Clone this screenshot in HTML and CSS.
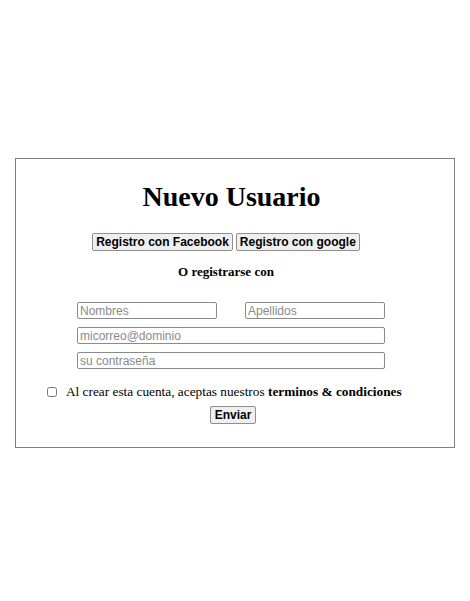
FILE: index.html
```html
<!DOCTYPE html>
<html lang="es">
<head>
<meta charset="utf-8">
<title>Nuevo Usuario</title>
<link rel="stylesheet" href="styles.css">
</head>
<body>
<form class="card">
  <h1 class="title">Nuevo Usuario</h1>
  <div class="social">
    <button type="button" class="btn">Registro con Facebook</button>
    <button type="button" class="btn">Registro con google</button>
  </div>
  <p class="or">O registrarse con</p>
  <div class="fields">
    <div class="names">
      <input class="field short" type="text" placeholder="Nombres">
      <input class="field short" type="text" placeholder="Apellidos">
    </div>
    <input class="field long" type="email" placeholder="micorreo@dominio">
    <input class="field long" type="password" placeholder="su contraseña">
  </div>
  <label class="terms">
    <input class="check" type="checkbox">
    <span>Al crear esta cuenta, aceptas nuestros <b>terminos &amp; condiciones</b></span>
  </label>
  <div class="submit">
    <button type="submit" class="btn">Enviar</button>
  </div>
</form>
</body>
</html>
```

FILE: styles.css
```css
html, body {
  background: #ffffff;
}
body {
  margin: 8px;
  font-family: "Liberation Serif", "Times New Roman", serif;
  color: #000;
}
.card {
  margin: 150px 0 0 7px;
  width: 438px;
  height: 288px;
  border: 1px solid #808080;
  display: flex;
  flex-direction: column;
}
.title {
  margin: 22px 7px 0 0;
  text-align: center;
  font-size: 28px;
  line-height: 32px;
  font-weight: bold;
}
.social {
  margin-top: 20px;
  padding-right: 18px;
  display: flex;
  justify-content: center;
  gap: 3px;
}
.btn {
  font-family: "Liberation Sans", Arial, sans-serif;
  font-size: 12px;
  font-weight: bold;
  line-height: 14px;
  height: 18px;
  padding: 1px 3px;
  color: #000;
  background: #efefef;
  border: 1px solid #8f8f8f;
  border-radius: 2px;
}
.or {
  margin: 13px 18px 0 0;
  text-align: center;
  font-size: 13px;
  line-height: 15px;
  font-weight: bold;
}
.fields {
  margin-top: 23px;
  padding-left: 61px;
  display: flex;
  flex-direction: column;
  gap: 8px;
}
.names {
  display: flex;
  gap: 28px;
}
.field {
  box-sizing: border-box;
  height: 17px;
  margin: 0;
  padding: 0 2px;
  font-family: "Liberation Sans", Arial, sans-serif;
  font-size: 12px;
  border: 1px solid #8a8a8a;
  border-radius: 2px;
  background: #fff;
}
.field::placeholder {
  color: #8a8a8a;
}
.short {
  width: 140px;
}
.long {
  width: 308px;
}
.terms {
  margin-top: 15px;
  padding-left: 31px;
  display: flex;
  align-items: center;
  gap: 9px;
  font-size: 13.3px;
  line-height: 15px;
}
.check {
  margin: 0;
  width: 10px;
  height: 10px;
}
.submit {
  margin-top: 7px;
  padding-right: 4px;
  display: flex;
  justify-content: center;
}
.submit .btn {
  padding: 1px 4px;
}
```
